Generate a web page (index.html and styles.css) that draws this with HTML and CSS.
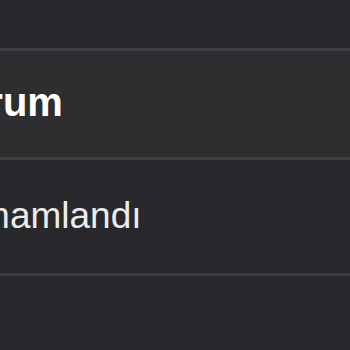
FILE: index.html
```html
<!DOCTYPE html>
<html>
    <head>
        <meta charset="UTF-8">
        <link rel="stylesheet" href="styles.css">
    </head>
    <body>
        <div class="table-wrap">
            <table class="orders">
                <thead>
                    <tr>
                        <th class="status-head">Durum</th>
                    </tr>
                </thead>
                <tbody>
                    <tr>
                        <td>Tamamlandı</td>
                    </tr>
                </tbody>
            </table>
        </div>
    </body>
</html>
```

FILE: styles.css
```css
body {
    font-family: 'Liberation Sans', Arial, sans-serif;
    background-color: #28272c;
    margin: 0;
    overflow: hidden;
}

.table-wrap {
    padding-top: 48px;
    margin-left: -66px;
}

.orders {
    width: calc(100% + 66px);
    border-collapse: collapse;
    font-size: 37px;
    line-height: 41px;
}

.orders th,
.orders td {
    text-align: left;
    padding: 0;
    border-top: 3px solid #3d3c40;
    border-bottom: 3px solid #3d3c40;
}

.orders th {
    background-color: #2e2d2f;
    color: #ffffff;
    font-size: 40px;
    font-weight: bold;
    padding: 31px 0 34px 0;
}

.orders td {
    background-color: #29282c;
    color: #ececec;
    padding: 35px 0 37px 6px;
}
```
